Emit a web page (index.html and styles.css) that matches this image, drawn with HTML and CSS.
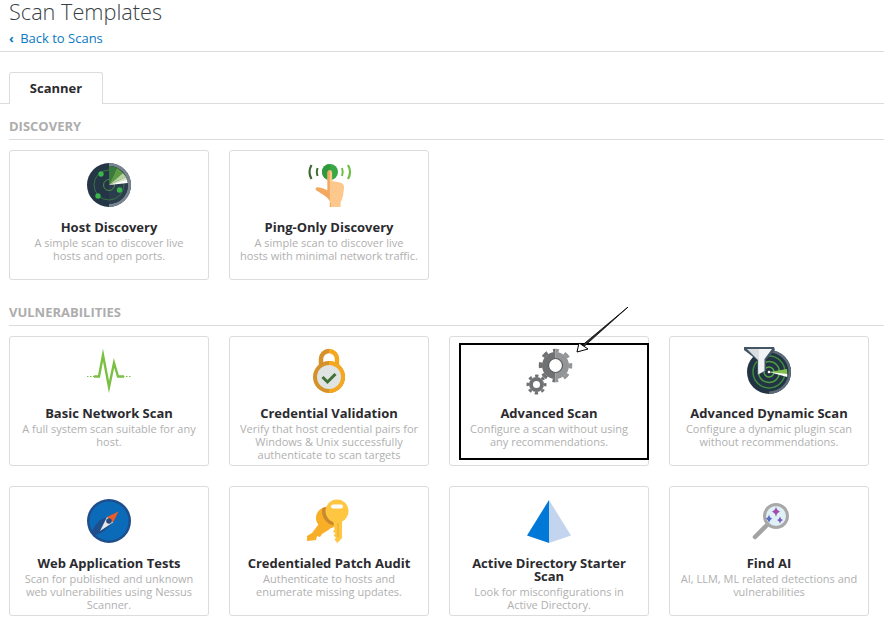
FILE: index.html
```html
<!DOCTYPE html>
<html lang="en">
<head>
    <meta charset="UTF-8">
    <title>Scan Templates</title>
    <link rel="stylesheet" href="styles.css">
</head>
<body>
    <header class="page-head">
        <h1>Scan Templates</h1>
        <a class="back-link" href="#"><span class="back-arrow">&#8249;</span> Back to Scans</a>
    </header>

    <div class="tabs">
        <div class="tab">Scanner</div>
    </div>

    <h2 class="section-title first">DISCOVERY</h2>
    <div class="card-grid">
        <div class="card">
            <svg class="icon" viewBox="0 0 44 44">
                <circle cx="22" cy="22" r="22" fill="#243646"/>
                <path d="M22 0a22 22 0 0 1 0 44v-3a19 19 0 0 0 0-38z" fill="#78858f"/>
                <path d="M22 3a19 19 0 0 1 0 38z" fill="#2c3e4e"/>
                <circle cx="22" cy="22" r="15" fill="none" stroke="#3f7f43" stroke-width=".8"/>
                <circle cx="22" cy="22" r="5.500" fill="none" stroke="#5c9c45" stroke-width=".8"/>
                <path d="M22 22V3a19 19 0 0 1 8 2z" fill="#3b7a3d"/>
                <path d="M22 22l8-17a19 19 0 0 1 6 5z" fill="#5d9c44"/>
                <path d="M22 22l14-12a19 19 0 0 1 3 4z" fill="#b4d29a"/>
                <path d="M22 22l17-8 1.500 4z" fill="#d4e4c3"/>
                <path d="M22 22l18-5 .8 3z" fill="#fff"/>
                <circle cx="14" cy="11" r="2.700" fill="#39b54a"/>
                <circle cx="32.500" cy="27" r="2.700" fill="#39b54a"/>
                <circle cx="11" cy="33" r="2.700" fill="#39b54a"/>
            </svg>
            <h3>Host Discovery</h3>
            <p>A simple scan to discover live hosts and open ports.</p>
        </div>
        <div class="card">
            <svg class="icon" viewBox="0 0 44 44">
                <g transform="translate(1.500 0)">
                    <circle cx="21.500" cy="9" r="8" fill="#39a843"/>
                    <path d="M21.500 1a8 8 0 0 0 0 16z" fill="#2f9a3c"/>
                    <path d="M3 2Q-1 9 3 16" fill="none" stroke="#3d6b33" stroke-width="2.200"/>
                    <path d="M9 5Q7.500 9 9 13" fill="none" stroke="#3d6b33" stroke-width="2"/>
                    <path d="M33.500 5Q35 9 33.500 13" fill="none" stroke="#6bbf45" stroke-width="2"/>
                    <path d="M39.500 2Q43.500 9 39.500 16" fill="none" stroke="#6bbf45" stroke-width="2.200"/>
                    <path d="M19 9.500a2.300 2.300 0 0 1 4.600 0V18l8 1.500q4 1 4 5l-1 8q-1 4-2.500 7V44H22.500v-4q-2-4-5-6.500L7.500 27q-1-2 1-2.500 4-.5 10.500 3z" fill="#fdc88c"/>
                    <path d="M19 9.500a2.300 2.300 0 0 1 2.300-2.300V44H22.500v-4q-2-4-5-6.500L7.500 27q-1-2 1-2.500 4-.5 10.500 3z" fill="#f3a75f"/>
                </g>
            </svg>
            <h3>Ping-Only Discovery</h3>
            <p>A simple scan to discover live hosts with minimal network traffic.</p>
        </div>
    </div>

    <h2 class="section-title">VULNERABILITIES</h2>
    <div class="card-grid">
        <div class="card">
            <svg class="icon" viewBox="0 0 44 44">
                <path d="M0 27.500h7" fill="none" stroke="#7ac143" stroke-width="1.200" stroke-dasharray="1.500 1.500"/>
                <path d="M36 27.500h8" fill="none" stroke="#7ac143" stroke-width="1.200" stroke-dasharray="1.500 1.500"/>
                <path d="M7 27.500h5L16 6l6 32 5-24 4 13.500h6" fill="none" stroke="#7ac143" stroke-width="2.400" stroke-miterlimit="20"/>
            </svg>
            <h3>Basic Network Scan</h3>
            <p>A full system scan suitable for any host.</p>
        </div>
        <div class="card">
            <svg class="icon" viewBox="0 0 44 44">
                <path d="M14 22V10a8 8 0 0 1 8-8" fill="none" stroke="#d5912a" stroke-width="4.500"/>
                <path d="M22 2a8 8 0 0 1 8 8v12" fill="none" stroke="#f5a81f" stroke-width="4.500"/>
                <circle cx="22" cy="28" r="16" fill="#d5912a"/>
                <path d="M22 12a16 16 0 0 1 0 32z" fill="#f5a81f"/>
                <circle cx="22" cy="28" r="12" fill="#dfe3e2"/>
                <path d="M15.500 28l5 5 8-8" fill="none" stroke="#3f7034" stroke-width="3"/>
            </svg>
            <h3>Credential Validation</h3>
            <p>Verify that host credential pairs for Windows &amp; Unix successfully authenticate to scan targets</p>
        </div>
        <div class="card">
            <svg class="icon" viewBox="0 0 44 44">
                <defs>
                    <clipPath id="gear-left"><rect x="5" y="-5" width="23.500" height="45"/></clipPath>
                    <clipPath id="gear-right"><rect x="28.500" y="-5" width="20" height="45"/></clipPath>
                </defs>
                <g clip-path="url(#gear-left)" fill="none" stroke="#707173">
                    <circle cx="28.500" cy="16.500" r="10.250" stroke-width="6.500"/>
                    <circle cx="28.500" cy="16.500" r="15" stroke-width="3.500" stroke-dasharray="5.890 5.890" stroke-dashoffset="2.945"/>
                </g>
                <g clip-path="url(#gear-right)" fill="none" stroke="#949597">
                    <circle cx="28.500" cy="16.500" r="10.250" stroke-width="6.500"/>
                    <circle cx="28.500" cy="16.500" r="15" stroke-width="3.500" stroke-dasharray="5.890 5.890" stroke-dashoffset="2.945"/>
                </g>
                <circle cx="28.500" cy="16.500" r="7" fill="#fff" stroke="#58595b" stroke-width="1.200"/>
                <circle cx="9.500" cy="35.500" r="5.500" fill="none" stroke="#707173" stroke-width="4"/>
                <circle cx="9.500" cy="35.500" r="8.750" fill="none" stroke="#707173" stroke-width="2.500" stroke-dasharray="3.436 3.436" stroke-dashoffset="1.718"/>
            </svg>
            <h3>Advanced Scan</h3>
            <p>Configure a scan without using any recommendations.</p>
        </div>
        <div class="card">
            <svg class="icon" viewBox="0 0 44 44">
                <circle cx="22" cy="23" r="22" fill="#223444"/>
                <path d="M22 1a22 22 0 0 1 0 44v-2.500a19.500 19.500 0 0 0 0-39z" fill="#5c6b78"/>
                <circle cx="22" cy="23" r="16" fill="none" stroke="#3f8a3f" stroke-width="1.500"/>
                <circle cx="22" cy="23" r="10.500" fill="none" stroke="#4e9a41" stroke-width="1.500"/>
                <circle cx="22" cy="23" r="5" fill="none" stroke="#5aa845" stroke-width="1.500"/>
                <path d="M22 23l18-3 .5 7z" fill="#7fbf4e"/>
                <path d="M22 23l18 2 .3 3z" fill="#fff"/>
                <circle cx="22" cy="23" r="1.300" fill="#fff"/>
                <path d="M-3-2H27l1 3-9 10v11l-9 4V11L-3 1z" fill="#445563"/>
                <path d="M0 0H12V25l-1 .500V11z" fill="#d9dee1"/>
                <path d="M12 0H25L17.500 10v12L12 25z" fill="#f2f3f4"/>
            </svg>
            <h3>Advanced Dynamic Scan</h3>
            <p>Configure a dynamic plugin scan without recommendations.</p>
        </div>
        <div class="card">
            <svg class="icon" viewBox="0 0 44 44">
                <circle cx="22" cy="22" r="22" fill="#1f4e8c"/>
                <circle cx="22" cy="22" r="19.500" fill="#0b6bb8"/>
                <path d="M5 32Q12 18 22 18l3 6Q16 36 7 36z" fill="#1f4e8c"/>
                <path d="M31.500 12.500 20 18l6 5.500z" fill="#f05a28"/>
                <path d="M13 32 20 18l6 5.500z" fill="#e4e6e8"/>
                <circle cx="22" cy="22" r="2.800" fill="#2b4a7c"/>
            </svg>
            <h3>Web Application Tests</h3>
            <p>Scan for published and unknown web vulnerabilities using Nessus Scanner.</p>
        </div>
        <div class="card">
            <svg class="icon" viewBox="0 0 44 44">
                <defs>
                    <clipPath id="key-back"><circle cx="20" cy="19" r="11"/></clipPath>
                </defs>
                <circle cx="20" cy="19" r="11" fill="#f8ae27"/>
                <path d="M14 22l9 8-8 5-2 3-3-1-1 4-9 1v-5l5-3z" fill="#f8ae27"/>
                <circle cx="30" cy="12" r="15" fill="#c98a2e" clip-path="url(#key-back)"/>
                <circle cx="30" cy="12" r="11.500" fill="#fec641"/>
                <rect x="24" y="5.500" width="12" height="4" rx="2" fill="#fff"/>
                <path d="M26 21h9v18l-4.500 5-3-3.500 1.500-2-2.500-2 2-2-2.500-2 1.500-2z" fill="#fec641"/>
                <path d="M30.500 24h1v14h-1z" fill="#e8a92e"/>
            </svg>
            <h3>Credentialed Patch Audit</h3>
            <p>Authenticate to hosts and enumerate missing updates.</p>
        </div>
        <div class="card">
            <svg class="icon" viewBox="0 0 44 44">
                <path d="M22 1 0 36.500l22 7.500z" fill="#0078d8"/>
                <path d="M22 1 44 36.500 22 44z" fill="#c2d4ee"/>
            </svg>
            <h3>Active Directory Starter Scan</h3>
            <p>Look for misconfigurations in Active Directory.</p>
        </div>
        <div class="card">
            <svg class="icon" viewBox="0 0 44 44">
                <path d="M20 26 8 38" fill="none" stroke="#a3a3a3" stroke-width="4.500" stroke-linecap="round"/>
                <circle cx="29" cy="17" r="11.500" fill="#dff0f6" stroke="#a8a8a8" stroke-width="3"/>
                <path d="M29 7.500q.8 4.300 4 5.200-3.200.9-4 5.300-.8-4.400-4-5.300 3.200-.9 4-5.200z" fill="#a14fae"/>
                <path d="M22 15.500q.7 3.500 3.500 4.200-2.800.7-3.500 4.300-.7-3.600-3.500-4.300 2.800-.7 3.500-4.200z" fill="#5a6cc4"/>
                <path d="M33 17.500q.6 3 3 3.500-2.400.5-3 3.500-.6-3-3-3.500 2.400-.5 3-3.500z" fill="#7a5cc0"/>
            </svg>
            <h3>Find AI</h3>
            <p>AI, LLM, ML related detections and vulnerabilities</p>
        </div>
    </div>

    <!-- annotation drawn over the screenshot -->
    <div class="mark-box"></div>
    <svg class="mark-arrow" viewBox="0 0 60 50">
        <path d="M57 0 11.500 38l1.500 1.500z" fill="#333" stroke="#000" stroke-width=".8"/>
        <path d="M6 45 8 36l9 6z" fill="#fff" stroke="#000" stroke-width="1"/>
    </svg>
</body>
</html>
```

FILE: styles.css
```css
body {
    margin: 0;
    position: relative;
    height: 632px;
    overflow: hidden;
    background: #fff;
    font-family: "Open Sans", sans-serif;
    color: #2b2b2f;
}
.page-head {
    height: 51px;
    padding-left: 9px;
    border-bottom: 1px solid #dcdcdc;
}
.page-head h1 {
    margin: 0;
    font-size: 21.700px;
    line-height: 24px;
    font-weight: 300;
    color: #3a3f45;
}
.back-link {
    display: block;
    margin-top: 5px;
    font-size: 13px;
    line-height: 18px;
    color: #0a78c2;
    text-decoration: none;
}
.back-arrow {
    font-weight: 700;
    margin-right: 3px;
}
.tabs {
    margin-top: 20px;
    padding-left: 9px;
    height: 31px;
    border-bottom: 1px solid #dcdcdc;
}
.tab {
    width: 92px;
    height: 31px;
    border: 1px solid #dcdcdc;
    border-bottom: none;
    border-radius: 3px 3px 0 0;
    background: #fff;
    text-align: center;
    font-size: 13px;
    font-weight: 700;
    line-height: 30px;
}
.section-title {
    margin: 25px 0 10px 9px;
    padding-bottom: 5px;
    height: 15px;
    border-bottom: 1px solid #dcdcdc;
    font-size: 13px;
    line-height: 15px;
    font-weight: 700;
    color: #adadad;
}
.section-title.first {
    margin-top: 15px;
}
.card-grid {
    display: grid;
    grid-template-columns: repeat(4, 200px);
    grid-auto-rows: 130px;
    gap: 20px;
    padding-left: 9px;
}
.card {
    box-sizing: border-box;
    padding: 12px 9.500px 0;
    border: 1px solid #dcdcdc;
    border-radius: 3px;
    overflow: hidden;
    text-align: center;
}
.icon {
    display: block;
    width: 44px;
    height: 44px;
    margin: 0 auto;
    overflow: visible;
}
.card h3 {
    margin: 14px 0 2px;
    font-size: 13px;
    line-height: 13px;
    font-weight: 700;
    color: #2b2b2f;
}
.card p {
    margin: 0;
    font-size: 11px;
    line-height: 13px;
    color: #b0b0b0;
}
.mark-box {
    position: absolute;
    left: 459px;
    top: 343px;
    width: 186px;
    height: 113px;
    border: 2px solid #000;
}
.mark-arrow {
    position: absolute;
    left: 571px;
    top: 307px;
    width: 60px;
    height: 50px;
}
```
